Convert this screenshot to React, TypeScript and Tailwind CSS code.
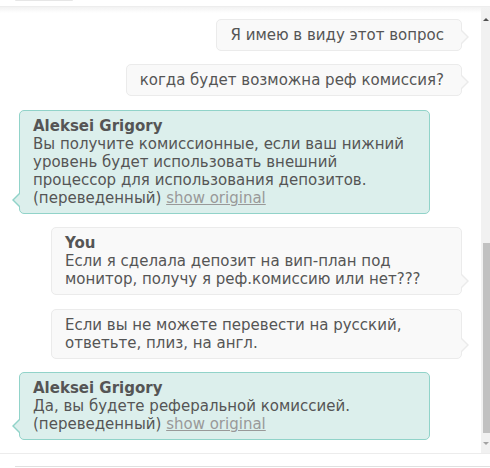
import type { ReactNode } from "react";

const FONT = { fontFamily: '"DejaVu Sans", Verdana, sans-serif' };

interface BubbleProps {
	side: "in" | "out";
	name?: string;
	lines: Array<ReactNode>;
	translated?: boolean;
	className?: string;
}

function Bubble({ side, name, lines, translated, className }: BubbleProps) {
	const isIn = side === "in";

	return (
		<div
			className={`relative rounded-[5px] border pl-[13px] pr-[17px] py-[6px] text-[15px] leading-[18px] text-[#555] whitespace-nowrap ${
				isIn
					? "self-start border-[#91d3c9] bg-[#dcefec]"
					: "self-end border-[#ebebeb] bg-[#f9f9f9]"
			} ${className ?? ""}`}
		>
			{name && <div className="font-bold">{name}</div>}
			{lines.map((line, i) => (
				<div key={i}>{line}</div>
			))}
			{translated && (
				<div>
					(переведенный){" "}
					<span className="text-[#999] underline">show original</span>
				</div>
			)}

			{isIn ? (
				<>
					<span className="absolute left-[-8px] bottom-[6px] h-0 w-0 border-y-[7px] border-r-[7px] border-y-transparent border-r-[#91d3c9]" />
					<span className="absolute left-[-6px] bottom-[7px] h-0 w-0 border-y-[6px] border-r-[6px] border-y-transparent border-r-[#dcefec]" />
				</>
			) : (
				<>
					<span className="absolute right-[-8px] bottom-[6px] h-0 w-0 border-y-[7px] border-l-[7px] border-y-transparent border-l-[#ebebeb]" />
					<span className="absolute right-[-6px] bottom-[7px] h-0 w-0 border-y-[6px] border-l-[6px] border-y-transparent border-l-[#f9f9f9]" />
				</>
			)}
		</div>
	);
}

export default function App() {
	return (
		<div className="flex h-[468px] w-[490px] flex-col overflow-hidden bg-white" style={FONT}>
			{/* header edge */}
			<div className="relative h-[7px] flex-none border-b border-[#ededed] bg-white">
				<div className="ml-[15px] h-[1px] w-[58px] rounded-b bg-[#e6e6e6]" />
				<div className="absolute inset-x-0 top-[7px] z-10 h-[6px] bg-gradient-to-b from-[#f2f2f2] to-transparent" />
			</div>

			<div className="flex h-[446px] flex-none">
				<div className="flex flex-1 flex-col px-[19px] pt-[12px]">
					<Bubble side="out" lines={["Я имею в виду этот вопрос"]} />
					<Bubble
						side="out"
						className="mt-[13px]"
						lines={["когда будет возможна реф комиссия?"]}
					/>
					<Bubble
						side="in"
						className="mt-[14px] w-[411px]"
						name="Aleksei Grigory"
						lines={[
							"Вы получите комиссионные, если ваш нижний",
							"уровень будет использовать внешний",
							"процессор для использования депозитов.",
						]}
						translated
					/>
					<Bubble
						side="out"
						className="mt-[13px] w-[411px]"
						name="You"
						lines={[
							"Если я сделала депозит на вип-план под",
							"монитор, получу я реф.комиссию или нет???",
						]}
					/>
					<Bubble
						side="out"
						className="mt-[14px] w-[411px]"
						lines={[
							"Если вы не можете перевести на русский,",
							"ответьте, плиз, на англ.",
						]}
					/>
					<Bubble
						side="in"
						className="mt-[13px] w-[411px]"
						name="Aleksei Grigory"
						lines={["Да, вы будете реферальной комиссией."]}
						translated
					/>
				</div>

				{/* scrollbar */}
				<div className="flex w-[9px] flex-none flex-col items-center bg-[#f1f1f1]">
					<div className="mt-[11px] h-0 w-0 border-x-[3px] border-b-[3px] border-x-transparent border-b-[#505050]" />
					<div className="mt-[222px] h-[190px] w-[7px] self-end bg-[#c1c1c1]" />
					<div className="mt-[9px] h-0 w-0 border-x-[3px] border-t-[3px] border-x-transparent border-t-[#a3a3a3]" />
				</div>
			</div>

			{/* composer edge */}
			<div className="flex-1 border-t border-[#ececec] pt-[12px]">
				<div className="ml-[15px] h-[4px] border-t border-[#e0e0e0]" />
			</div>
		</div>
	);
}
